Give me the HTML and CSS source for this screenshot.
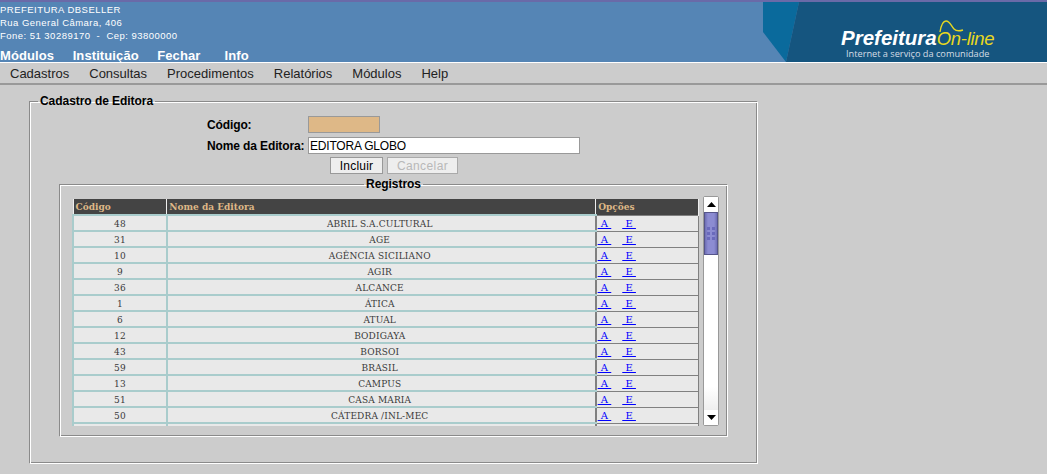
FILE: index.html
```html
<!DOCTYPE html>
<html lang="pt">
<head>
  <meta charset="UTF-8">
  <title>Cadastro de Editora</title>
  <link rel="stylesheet" href="styles.css">
</head>
<body>

<div class="topo">
  <div class="topo-info">
    <div class="inst">
      <div>PREFEITURA DBSELLER</div>
      <div>Rua General Câmara, 406</div>
      <div>Fone: 51 30289170 &nbsp;-&nbsp; Cep: 93800000</div>
    </div>
    <div class="menu-topo">
      <a>Módulos</a>
      <a>Instituição</a>
      <a>Fechar</a>
      <a class="info">Info</a>
    </div>
  </div>
  <div class="logo">
    <svg class="logo-fundo" width="284" height="60" viewBox="0 0 284 60">
      <polygon points="0,0 36,0 23,60 0,30" fill="#0a6a9c"/>
      <polygon points="36,0 284,0 284,60 23,60" fill="#15557f"/>
      <path d="M177 30 C178 24 180 19 183 19 C187 19 188 24 191 27 C194 30 197 29 200 28" fill="none" stroke="#e8d820" stroke-width="1.4"/>
    </svg>
    <div class="logo-nome"><b>Prefeitura</b><span>On-line</span></div>
    <div class="logo-sub">Internet a serviço da comunidade</div>
  </div>
</div>

<div class="menu">
  <a>Cadastros</a>
  <a>Consultas</a>
  <a>Procedimentos</a>
  <a>Relatórios</a>
  <a>Módulos</a>
  <a>Help</a>
</div>

<fieldset class="cadastro">
  <legend>Cadastro de Editora</legend>

  <div class="form">
    <div class="linha">
      <label class="rotulo">Código:</label>
      <input type="text" class="codigo" readonly>
    </div>
    <div class="linha">
      <label class="rotulo">Nome da Editora:</label>
      <input type="text" class="nome" value="EDITORA GLOBO">
    </div>
    <div class="botoes">
      <button class="incluir">Incluir</button>
      <button class="cancelar" disabled>Cancelar</button>
    </div>
  </div>

  <fieldset class="registros">
    <legend>Registros</legend>
    <div class="lista">
      <table>
        <thead>
          <tr><th class="c1">Código</th><th class="c2">Nome da Editora</th><th class="c3">Opções</th></tr>
        </thead>
        <tbody id="linhas"></tbody>
      </table>
      <div class="barra">
        <div class="seta"><svg width="9" height="5" viewBox="0 0 9 5"><polygon points="4.5,0 9,5 0,5"/></svg></div>
        <div class="cursor"><svg width="8" height="13" viewBox="0 0 8 13">
          <g fill="#6a6abc"><rect x="0" width="3" height="3"/><rect x="5" width="3" height="3"/><rect x="0" y="5" width="3" height="3"/><rect x="5" y="5" width="3" height="3"/><rect x="0" y="10" width="3" height="3"/><rect x="5" y="10" width="3" height="3"/></g>
        </svg></div>
        <div class="trilho"></div>
        <div class="seta"><svg width="9" height="5" viewBox="0 0 9 5"><polygon points="0,0 9,0 4.5,5"/></svg></div>
      </div>
    </div>
  </fieldset>
</fieldset>

<script src="app.js"></script>
</body>
</html>
```
FILE: styles.css
```css
* {
  box-sizing: border-box;
}

body {
  margin: 0;
  height: 474px;
  overflow: hidden;
  background-color: #cccccc;
  font-family: "Liberation Sans", Arial, sans-serif;
  font-size: 12px;
  color: #000;
}

.topo {
  display: flex;
  justify-content: space-between;
  height: 63px;
  background-color: #5585b5;
  border-top: 2px solid #6a6aa8;
  border-bottom: 1px solid #fff;
}

.topo-info {
  color: #fff;
}

.inst {
  padding-top: 1px;
  font-size: 9.5px;
  line-height: 13px;
  letter-spacing: 0.47px;
}

.menu-topo {
  display: flex;
  gap: 18.5px;
  margin-top: 6px;
  font-size: 13px;
  font-weight: bold;
  line-height: 15px;
  letter-spacing: 0.1px;
}

.menu-topo .info {
  margin-left: 5.5px;
}

.logo {
  position: relative;
  width: 284px;
  height: 60px;
  color: #fff;
}

.logo-fundo {
  position: absolute;
  left: 0;
  top: 0;
}

.logo-nome {
  position: absolute;
  left: 78px;
  top: 24px;
  display: flex;
  align-items: baseline;
  font-size: 20.5px;
  line-height: 24px;
  font-style: italic;
  white-space: nowrap;
}

.logo-nome span {
  font-size: 18.5px;
  letter-spacing: -0.3px;
  color: #e8d820;
}

.logo-sub {
  position: absolute;
  left: 83px;
  top: 46px;
  font-family: "Open Sans", sans-serif;
  font-size: 9.2px;
  line-height: 12px;
  color: #d5dde5;
  white-space: nowrap;
}

.menu {
  display: flex;
  gap: 20px;
  height: 22px;
  padding: 3px 0 0 10px;
  border-bottom: 2px solid #999999;
  font-size: 13px;
  line-height: 15px;
  color: #222;
}

.cadastro {
  height: 370px;
  width: 729px;
  margin: 9px 0 0 29px;
  padding: 0;
  border: 1px solid #fff;
  border-color: #8a8a8a #fff #fff #8a8a8a;
  box-shadow: inset 1px 1px 0 #fff, inset -1px -1px 0 #8a8a8a;
}

.cadastro legend {
  margin-left: 8px;
  padding: 0 2px;
  font-weight: bold;
  line-height: 14px;
  letter-spacing: -0.05px;
}

.form {
  width: 551px;
  margin-top: 8px;
}

.linha {
  display: flex;
  align-items: center;
  margin-left: 177px;
  margin-bottom: 4px;
}

.rotulo {
  width: 101px;
  font-weight: bold;
  letter-spacing: -0.12px;
  white-space: nowrap;
}

input {
  height: 17px;
  padding: 0 1px;
  border: 1px solid #999;
  font-family: "Liberation Sans", Arial, sans-serif;
  font-size: 12px;
  letter-spacing: -0.2px;
  background-color: #fff;
}

.codigo {
  width: 72px;
  background-color: #deb887;
}

.nome {
  width: 272px;
}

.botoes {
  display: flex;
  gap: 4px;
  margin-left: 300px;
  margin-top: -1px;
}

button {
  height: 17px;
  padding: 0;
  border: 1px solid #999;
  background-color: #eeeeee;
  font-family: "Liberation Sans", Arial, sans-serif;
  font-size: 12px;
  letter-spacing: 0.2px;
  color: #000;
}

.incluir {
  width: 53px;
}

.cancelar {
  width: 71px;
}

button:disabled {
  border-color: #aaa;
  color: #b8b8b8;
  letter-spacing: 0.4px;
}

.registros {
  width: 669px;
  height: 260px;
  margin: 3px 0 0 29px;
  padding: 0;
  border: 1px solid #fff;
  border-color: #8a8a8a #fff #fff #8a8a8a;
  box-shadow: inset 1px 1px 0 #fff, inset -1px -1px 0 #8a8a8a;
}

.registros legend {
  margin: 0 auto;
  padding: 0 2px;
  font-weight: bold;
  line-height: 14px;
}

.lista {
  display: flex;
  align-items: flex-start;
  gap: 4px;
  height: 230px;
  margin: 5px 0 0 12px;
}

table {
  display: block;
  width: 627px;
  height: 227px;
  margin-top: 3px;
  overflow: hidden;
  border-collapse: collapse;
  table-layout: fixed;
  font-family: "DejaVu Serif", serif;
  font-size: 9px;
  letter-spacing: 0.15px;
  color: #3a3a3a;
}

th {
  height: 16px;
  padding: 0 2px;
  background-color: #444444;
  color: #deb887;
  letter-spacing: 0;
  text-align: left;
  border-left: 1px solid #eee;
  border-right: 1px solid #eee;
}

td {
  height: 16px;
  padding: 2px 0 0;
  background-color: #e9e9e9;
  text-align: center;
  border: 2px solid #a9cccc;
  white-space: nowrap;
}

.c1 {
  width: 94px;
}

.c2 {
  width: 430px;
}

.c3 {
  width: 103px;
}

td.c2 {
  padding-right: 3px;
  border-right: none;
}

td.c3 {
  padding: 0 0 0 1px;
  border-width: 1px;
  border-color: #808080;
  border-left-width: 2px;
  text-align: left;
}

td.c3 a {
  margin-right: 11px;
  font-size: 10px;
  letter-spacing: 0;
  color: #0000ff;
  text-decoration: underline;
  white-space: pre;
}

.barra {
  display: flex;
  flex-direction: column;
  width: 16px;
  height: 230px;
  border: 1px solid #999;
  border-radius: 2px;
  background-color: #fff;
}

.seta {
  display: flex;
  align-items: center;
  justify-content: center;
  height: 15px;
  background-color: #fff;
}

.cursor {
  display: flex;
  align-items: center;
  justify-content: center;
  height: 43px;
  background: linear-gradient(to right, #6e6eb4, #8c8cd2 25%, #8c8cd2 75%, #6e6eb4);
  border: 1px solid #55558a;
}

.trilho {
  flex: 1;
  background: linear-gradient(to bottom, #fff 85%, #eee);
}
```
FILE: app.js
```js
const editoras = [
  [48, 'ABRIL S.A.CULTURAL'],
  [31, 'AGE'],
  [10, 'AGÊNCIA SICILIANO'],
  [9, 'AGIR'],
  [36, 'ALCANCE'],
  [1, 'ÁTICA'],
  [6, 'ATUAL'],
  [12, 'BODIGAYA'],
  [43, 'BORSOI'],
  [59, 'BRASIL'],
  [13, 'CAMPUS'],
  [51, 'CASA MARIA'],
  [50, 'CÁTEDRA /INL-MEC'],
  ['', '']
];

const linhas = document.getElementById('linhas');

editoras.forEach(function (editora) {
  const tr = document.createElement('tr');
  const opcoes = editora[0] === '' ? '' : '<a> A </a><a> E </a>';
  tr.innerHTML = '<td class="c1">' + editora[0] + '</td><td class="c2">' + editora[1] + '</td><td class="c3">' + opcoes + '</td>';
  linhas.appendChild(tr);
});
```
